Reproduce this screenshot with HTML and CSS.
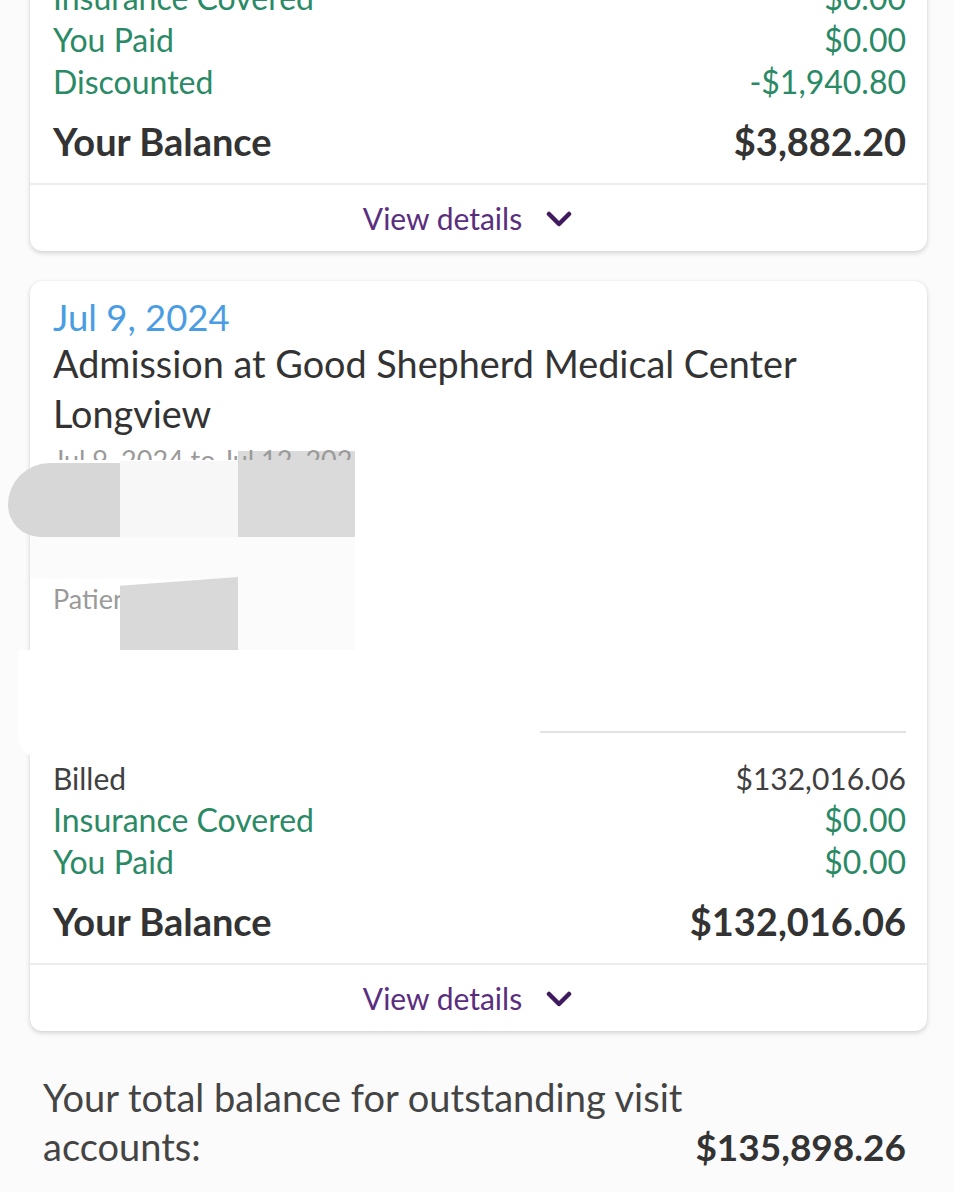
FILE: index.html
```html
<!DOCTYPE html>
<html lang="en">
<head>
<meta charset="utf-8">
<title>Visit accounts</title>
<link rel="stylesheet" href="styles.css">
</head>
<body>
<main class="page">
  <section class="card card-first">
    <div class="card-body">
      <div class="row green"><span>Insurance Covered</span><span>$0.00</span></div>
      <div class="row green"><span>You Paid</span><span>$0.00</span></div>
      <div class="row green"><span>Discounted</span><span>-$1,940.80</span></div>
      <div class="row balance"><span>Your Balance</span><span>$3,882.20</span></div>
    </div>
    <div class="details">
      <span>View details</span>
      <svg class="chev" width="26" height="18" viewBox="0 0 26 18"><path d="M3 4 L13 14 L23 4" fill="none" stroke="#3f1a5e" stroke-width="4.5" stroke-linecap="round" stroke-linejoin="round"/></svg>
    </div>
  </section>

  <section class="card">
    <div class="card-body">
      <div class="date">Jul 9, 2024</div>
      <div class="title">Admission at Good Shepherd Medical Center Longview</div>
      <div class="redacted">
        <div class="blk b3"></div>
        <div class="faint dates">Jul 9, 2024 to Jul 12, 2024</div>
        <div class="faint patient">Patient</div>
        <div class="blk b1"></div>
        <div class="blk b2"></div>
        <div class="blk b4"></div>
        <div class="blk b5"></div>
        <div class="blk b6"></div>
        <div class="blk b7"></div>
        <div class="rule"></div>
      </div>
      <div class="row billed"><span>Billed</span><span>$132,016.06</span></div>
      <div class="row green"><span>Insurance Covered</span><span>$0.00</span></div>
      <div class="row green"><span>You Paid</span><span>$0.00</span></div>
      <div class="row balance"><span>Your Balance</span><span>$132,016.06</span></div>
    </div>
    <div class="details">
      <span>View details</span>
      <svg class="chev" width="26" height="18" viewBox="0 0 26 18"><path d="M3 4 L13 14 L23 4" fill="none" stroke="#3f1a5e" stroke-width="4.5" stroke-linecap="round" stroke-linejoin="round"/></svg>
    </div>
  </section>

  <section class="total">
    <span class="total-label">Your total balance for outstanding visit accounts:</span>
    <span class="total-amount">$135,898.26</span>
  </section>
</main>
</body>
</html>
```

FILE: styles.css
```css
* { box-sizing: border-box; }
html, body { margin: 0; padding: 0; }
body {
  background: #fbfbfb;
  font-family: Lato, "Noto Sans", sans-serif;
  color: #333;
  width: 954px;
  height: 1192px;
  overflow: hidden;
}
.page {
  padding: 0 27px 0 30px;
}
.card {
  background: #fff;
  border-radius: 12px;
  box-shadow: 0 2px 5px rgba(0,0,0,0.16), 0 0 1px rgba(0,0,0,0.12);
  margin-bottom: 30px;
}
.card-first {
  margin-top: -50px;
}
.card-body {
  padding: 14px 21px 12px 23px;
}
.card-first .card-body { padding-top: 27px; }
.row {
  display: flex;
  justify-content: space-between;
  align-items: center;
  font-size: 32px;
  line-height: 42px;
  height: 42px;
}
.green { color: #2a8a66; }
.billed { color: #404040; font-size: 30px; }
.balance {
  font-size: 38px;
  font-weight: 700;
  color: #333;
  padding-top: 8px;
  height: 68px;
  line-height: 60px;
}
.details {
  border-top: 2px solid #ececec;
  height: 68px;
  display: flex;
  align-items: center;
  justify-content: center;
  gap: 24px;
  color: #5a2e7e;
  font-size: 30px;
  padding-right: 22px;
}
.chev { margin-top: 2px; }
.date {
  color: #4a9de3;
  font-size: 36.5px;
  line-height: 44px;
}
.title {
  font-size: 37.8px;
  line-height: 50px;
  color: #333;
  max-width: 800px;
}
.redacted {
  position: relative;
  height: 318px;
}
.faint {
  position: absolute;
  color: #9a9a9a;
  font-size: 27px;
  line-height: 30px;
  white-space: nowrap;
  overflow: hidden;
}
.dates { left: 0; top: 6px; width: 302px; height: 15px; }
.patient { left: 0; top: 145px; }
.blk { position: absolute; }
.b1 { left: -45px; top: 24px; width: 142px; height: 74px; background: #d7d7d7; border-radius: 44px 0 0 34px; }
.b2 { left: 67px; top: 22px; width: 118px; height: 76px; background: #f7f7f7; }
.b3 { left: 185px; top: 12px; width: 117px; height: 86px; background: #dadada; }
.b4 { left: -23px; top: 98px; width: 325px; height: 42px; background: #fbfbfb; }
.b5 { left: 67px; top: 138px; width: 118px; height: 73px; background: #d9d9d9; clip-path: polygon(0 12%, 100% 0, 100% 100%, 0 100%); }
.b6 { left: 185px; top: 140px; width: 117px; height: 71px; background: #fbfbfb; }
.b7 { left: -35px; top: 211px; width: 522px; height: 107px; background: #fff; border-radius: 0 0 0 20px; }
.rule {
  position: absolute;
  left: 487px;
  right: 0;
  top: 292px;
  height: 2px;
  background: #e2e2e2;
}
.total {
  display: flex;
  justify-content: space-between;
  align-items: flex-end;
  padding: 12px 21px 0 13px;
  font-size: 38px;
  line-height: 49px;
  color: #444;
}
.total-label { max-width: 680px; }
.total-amount { font-weight: 700; font-size: 37px; color: #333; }
```
